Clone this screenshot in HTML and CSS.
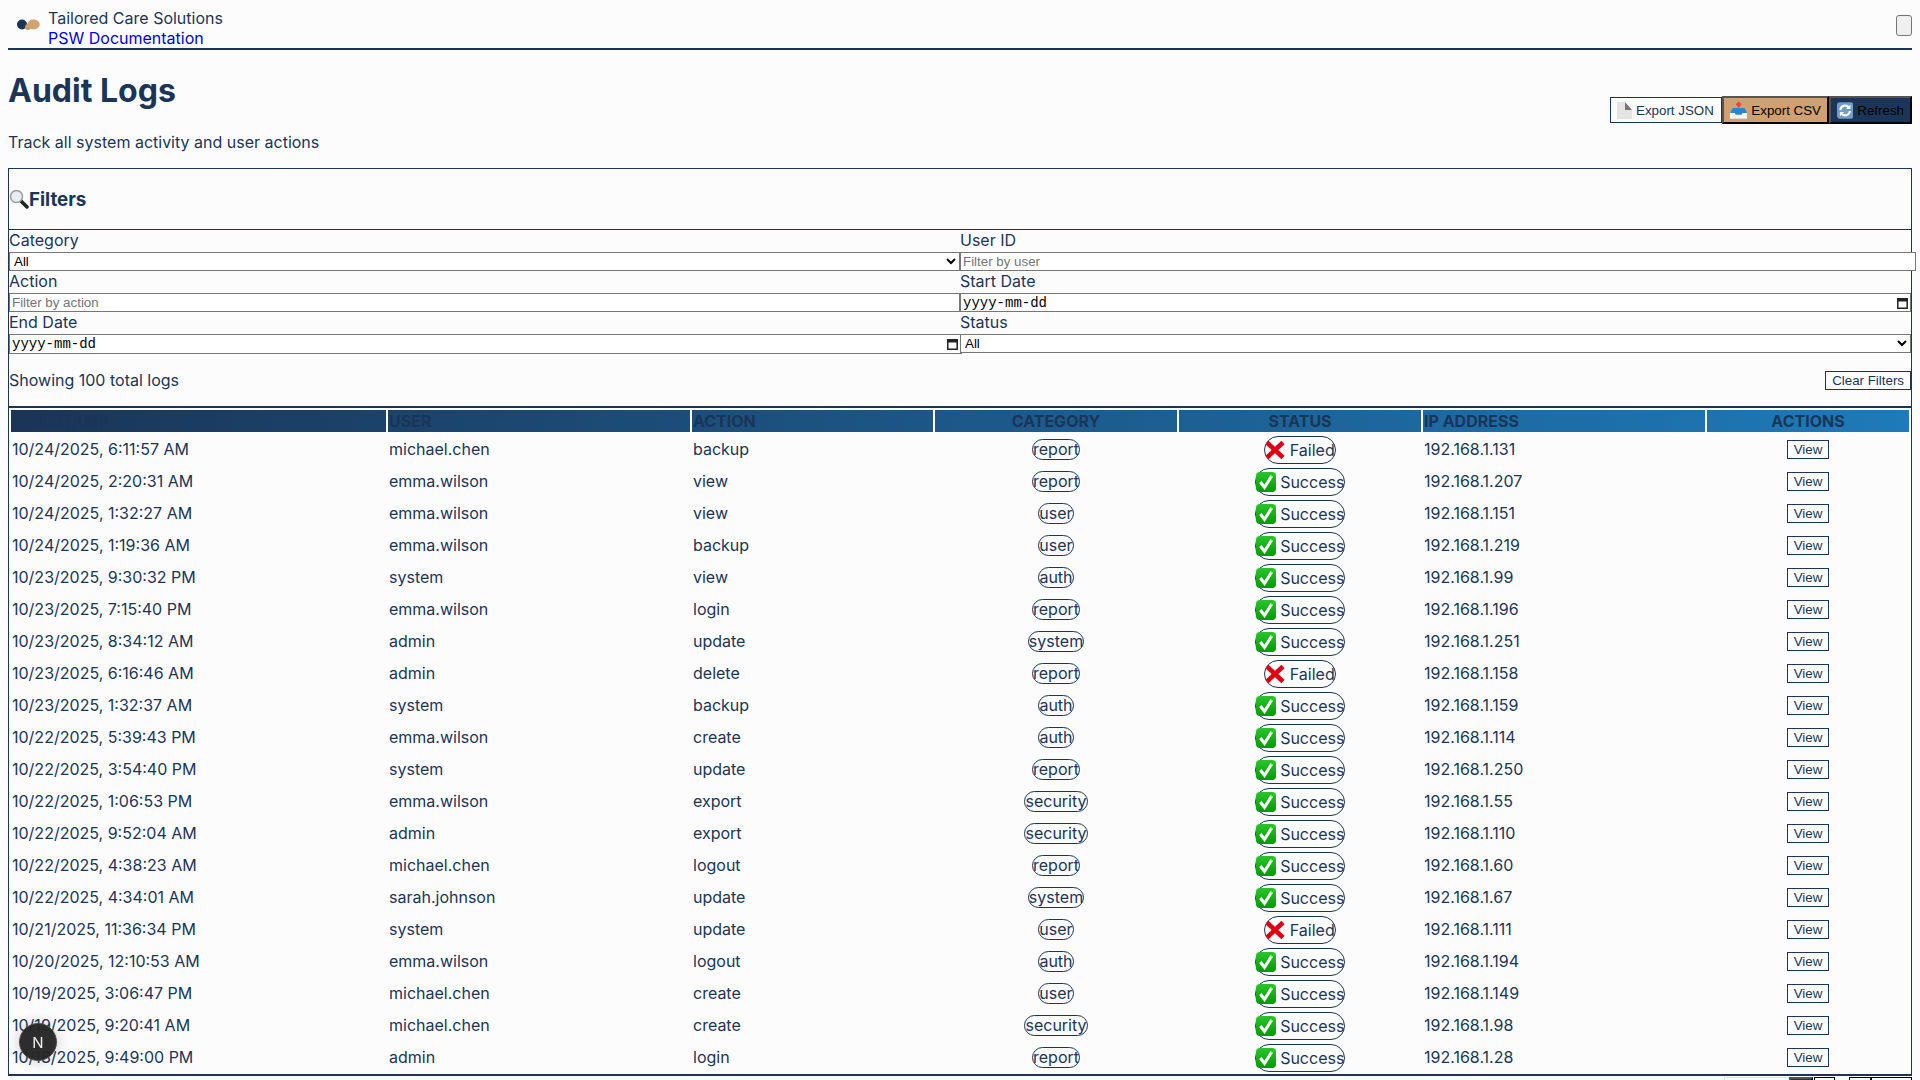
FILE: index.html
```html
<!DOCTYPE html>
<html lang="en">
<head>
    <meta charset="UTF-8">
    <meta name="viewport" content="width=device-width, initial-scale=1.0">
    <title>Audit Logs</title>
    <link rel="stylesheet" href="styles.css">
</head>
<body>
    <svg class="defs" width="0" height="0" aria-hidden="true">
        <defs>
            <linearGradient id="okfill" x1="0" y1="0" x2="0" y2="1">
                <stop offset="0" stop-color="#2cc52c"/>
                <stop offset="1" stop-color="#049a04"/>
            </linearGradient>
        </defs>
        <symbol id="ok" viewBox="0 0 20 20">
            <rect x="0" y="0" width="20" height="20" rx="4" fill="url(#okfill)"/>
            <path d="M4.300 10l4.200 5.300 7.200-11.300" fill="none" stroke="#fff" stroke-width="3"/>
        </symbol>
        <symbol id="bad" viewBox="0 0 20 20">
            <path d="M2 2.500l16 15M18 2.500l-16 15" fill="none" stroke="#e2000f" stroke-width="4.600"/>
        </symbol>
        <symbol id="cal" viewBox="0 0 11 12">
            <path d="M.8 2.500h9.400v8.700H.8z" fill="none" stroke="#222" stroke-width="1.500"/>
            <path d="M0 1h11v3.500H0z" fill="#222"/>
        </symbol>
    </svg>

    <header class="topbar">
        <svg class="logo" width="23" height="12" viewBox="0 0 23 12">
            <circle cx="5" cy="5.500" r="5" fill="#1a3558"/>
            <circle cx="11" cy="8" r="3" fill="#c99d68"/>
            <ellipse cx="16.500" cy="5.500" rx="6.200" ry="5" fill="#d2a272"/>
        </svg>
        <div class="brand">
            <div>Tailored Care Solutions</div>
            <a href="#">PSW Documentation</a>
        </div>
        <button class="menu-btn" type="button"></button>
    </header>

    <div class="page-head">
        <div>
            <h1>Audit Logs</h1>
            <p>Track all system activity and user actions</p>
        </div>
        <div class="head-actions">
            <button class="btn-json" type="button">
                <svg width="15" height="17" viewBox="0 0 15 17"><path d="M0 0h8v5l7 3v9H0z" fill="#e4e4e4"/><path d="M8 0l7 8H8z" fill="#777"/></svg>
                Export JSON
            </button>
            <button class="btn-csv" type="button">
                <svg width="18" height="18" viewBox="0 0 18 18"><path d="M9 0l3 3-3 4-3-4z" fill="#ee4444"/><path d="M0 11h18v7H0z" fill="#f4f4f4"/><path d="M3 7h12l3 5h-5l-1 2H6l-1-2H0z" fill="#2b86d0"/></svg>
                Export CSV
            </button>
            <button class="btn-refresh" type="button">
                <svg width="17" height="17" viewBox="0 0 17 17"><rect width="17" height="17" rx="3" fill="#6f9cc8"/><path d="M3.500 8a5 5 0 0 1 9-2.500M13.500 9a5 5 0 0 1-9 2.500" fill="none" stroke="#fff" stroke-width="2.200"/><path d="M14 2.500v4.500h-4.500zM3 14.500V10h4.500z" fill="#fff"/></svg>
                Refresh
            </button>
        </div>
    </div>

    <section class="filters">
        <h2>
            <svg width="20" height="20" viewBox="0 0 20 20"><path d="M11 11l7 7" stroke="#222" stroke-width="3.500" stroke-linecap="round"/><circle cx="7.500" cy="7.500" r="6" fill="#e6eef4" stroke="#9a9a9a" stroke-width="1.500"/></svg>Filters
        </h2>
        <div class="filter-grid">
            <div class="field">
                <label>Category</label>
                <select><option>All</option></select>
            </div>
            <div class="field">
                <label>User ID</label>
                <input class="over" type="text" placeholder="Filter by user">
            </div>
            <div class="field">
                <label>Action</label>
                <input type="text" placeholder="Filter by action">
            </div>
            <div class="field">
                <label>Start Date</label>
                <div class="date-box"><span>yyyy-mm-dd</span><svg width="11" height="12"><use href="#cal"/></svg></div>
            </div>
            <div class="field">
                <label>End Date</label>
                <div class="date-box wide"><span>yyyy-mm-dd</span><svg width="11" height="12"><use href="#cal"/></svg></div>
            </div>
            <div class="field">
                <label>Status</label>
                <select><option>All</option></select>
            </div>
        </div>
        <div class="filter-foot">
            <span>Showing 100 total logs</span>
            <button type="button">Clear Filters</button>
        </div>
    </section>

    <div class="table-box">
        <table>
            <colgroup>
                <col class="c-time"><col class="c-user"><col class="c-action"><col class="c-cat"><col class="c-status"><col class="c-ip"><col class="c-view">
            </colgroup>
            <thead>
                <tr>
                    <th>TIMESTAMP</th>
                    <th>USER</th>
                    <th>ACTION</th>
                    <th class="mid">CATEGORY</th>
                    <th class="mid">STATUS</th>
                    <th>IP ADDRESS</th>
                    <th class="mid">ACTIONS</th>
                </tr>
            </thead>
            <tbody id="rows"></tbody>
        </table>
    </div>

    <footer class="pager">
        <span>Showing 1 to 20 of 100 logs</span>
        <div class="pager-controls">
            <div class="page-box"></div>
            <button class="page-on" type="button"></button>
            <button type="button"></button>
            <button class="page-next" type="button"></button>
            <button class="page-last" type="button"></button>
        </div>
    </footer>

    <div class="dev-badge">N</div>

    <script>
        const logs = [
            ['10/24/2025, 6:11:57 AM', 'michael.chen', 'backup', 'report', 0, '192.168.1.131'],
            ['10/24/2025, 2:20:31 AM', 'emma.wilson', 'view', 'report', 1, '192.168.1.207'],
            ['10/24/2025, 1:32:27 AM', 'emma.wilson', 'view', 'user', 1, '192.168.1.151'],
            ['10/24/2025, 1:19:36 AM', 'emma.wilson', 'backup', 'user', 1, '192.168.1.219'],
            ['10/23/2025, 9:30:32 PM', 'system', 'view', 'auth', 1, '192.168.1.99'],
            ['10/23/2025, 7:15:40 PM', 'emma.wilson', 'login', 'report', 1, '192.168.1.196'],
            ['10/23/2025, 8:34:12 AM', 'admin', 'update', 'system', 1, '192.168.1.251'],
            ['10/23/2025, 6:16:46 AM', 'admin', 'delete', 'report', 0, '192.168.1.158'],
            ['10/23/2025, 1:32:37 AM', 'system', 'backup', 'auth', 1, '192.168.1.159'],
            ['10/22/2025, 5:39:43 PM', 'emma.wilson', 'create', 'auth', 1, '192.168.1.114'],
            ['10/22/2025, 3:54:40 PM', 'system', 'update', 'report', 1, '192.168.1.250'],
            ['10/22/2025, 1:06:53 PM', 'emma.wilson', 'export', 'security', 1, '192.168.1.55'],
            ['10/22/2025, 9:52:04 AM', 'admin', 'export', 'security', 1, '192.168.1.110'],
            ['10/22/2025, 4:38:23 AM', 'michael.chen', 'logout', 'report', 1, '192.168.1.60'],
            ['10/22/2025, 4:34:01 AM', 'sarah.johnson', 'update', 'system', 1, '192.168.1.67'],
            ['10/21/2025, 11:36:34 PM', 'system', 'update', 'user', 0, '192.168.1.111'],
            ['10/20/2025, 12:10:53 AM', 'emma.wilson', 'logout', 'auth', 1, '192.168.1.194'],
            ['10/19/2025, 3:06:47 PM', 'michael.chen', 'create', 'user', 1, '192.168.1.149'],
            ['10/19/2025, 9:20:41 AM', 'michael.chen', 'create', 'security', 1, '192.168.1.98'],
            ['10/18/2025, 9:49:00 PM', 'admin', 'login', 'report', 1, '192.168.1.28']
        ];

        document.getElementById('rows').innerHTML = logs.map(function (l) {
            const status = l[4]
                ? '<span class="pill-status"><svg width="20" height="20"><use href="#ok"/></svg> Success</span>'
                : '<span class="pill-status"><svg width="20" height="20"><use href="#bad"/></svg> Failed</span>';
            return `<tr>
                <td>${l[0]}</td>
                <td>${l[1]}</td>
                <td>${l[2]}</td>
                <td class="mid"><span class="pill-cat">${l[3]}</span></td>
                <td class="mid">${status}</td>
                <td>${l[5]}</td>
                <td class="mid"><button class="btn-view" type="button">View</button></td>
            </tr>`;
        }).join('');
    </script>
</body>
</html>
```

FILE: styles.css
```css
html, body {
    height: 100%;
    overflow: hidden;
}

body {
    margin: 0;
    padding: 0 8px;
    background-color: #fcfcfd;
    color: #1a3558;
    font-family: Inter, "Liberation Sans", sans-serif;
    font-size: 16px;
}

.defs {
    position: absolute;
}

.topbar {
    display: flex;
    align-items: center;
    height: 46px;
    padding: 2px 0 0 9px;
    border-bottom: 2px solid #1a3558;
}

.logo {
    flex: none;
    margin-right: 8px;
}

.brand {
    flex: 1;
    padding-top: 5px;
    line-height: 20px;
}

.brand a {
    color: #0000ee;
    text-decoration: none;
}

.menu-btn {
    width: 16px;
    height: 21px;
    padding: 0;
    background: #efefef;
    border: 1px solid #767676;
    border-radius: 3px;
}

.page-head {
    display: flex;
    justify-content: space-between;
    align-items: flex-end;
    height: 118px;
}

h1 {
    margin: 22px 0 0;
    font-size: 32px;
    font-weight: 700;
    line-height: 39px;
}

.page-head p {
    margin: 23px 0 16px;
    line-height: 19px;
}

.head-actions {
    display: flex;
    align-items: center;
    margin-bottom: 44px;
}

.head-actions button {
    display: flex;
    align-items: center;
    gap: 4px;
    padding: 0 6px;
    font-family: "Liberation Sans", sans-serif;
    font-size: 13.333px;
    white-space: nowrap;
}

.btn-json {
    width: 112px;
    height: 26px;
    background: #fcfcfd;
    border: 1px solid #1a3558;
    color: #1a3558;
}

.btn-csv {
    width: 107px;
    height: 28px;
    background: #d0a070;
    border: 2px outset #000;
    color: #000;
}

.btn-refresh {
    width: 83px;
    height: 28px;
    background: #1a3558;
    border: 2px outset #000;
    color: #000;
}

.filters {
    border: 1px solid #1a3558;
    border-bottom: 0;
}

h2 {
    display: flex;
    align-items: center;
    height: 60px;
    margin: 0;
    border-bottom: 1px solid #1a3558;
    font-size: 18.72px;
    font-weight: 700;
}

.filter-grid {
    display: grid;
    grid-template-columns: 951px 1fr;
}

.field {
    display: flex;
    flex-direction: column;
    min-width: 0;
}

.field label {
    height: 21px;
    padding-top: 1px;
    line-height: 19px;
}

.field input,
.field select,
.date-box {
    box-sizing: border-box;
    width: 100%;
    height: 19px;
    margin: 0;
    background: #fff;
    border: 1px solid #767676;
    border-radius: 0;
    color: #000;
    font-family: "Liberation Sans", sans-serif;
    font-size: 13.333px;
}

.field input {
    padding: 1px 2px;
}

.field select {
    padding: 0;
}

.field input.over {
    width: calc(100% + 5px);
}

.date-box {
    display: flex;
    justify-content: space-between;
    align-items: center;
    padding: 0 2px;
    font-family: "Liberation Mono", monospace;
    font-size: 14px;
}

.date-box.wide {
    width: calc(100% + 2px);
    height: 20px;
    padding-right: 3px;
}

.filter-foot {
    display: flex;
    justify-content: space-between;
    align-items: center;
    height: 52px;
    line-height: 19px;
}

.filter-foot button {
    height: 19px;
    padding: 0 6px;
    background: #fcfcfd;
    border: 1px solid #1a3558;
    color: #1a3558;
    font-family: "Liberation Sans", sans-serif;
    font-size: 13.333px;
}

.table-box {
    border: 1px solid #1a3558;
    border-width: 2px 1px;
}

table {
    width: 100%;
    table-layout: fixed;
    border-collapse: separate;
    border-spacing: 2px;
}

.c-time { width: 375px; }
.c-user { width: 302px; }
.c-action { width: 241px; }
.c-cat { width: 242px; }
.c-status { width: 242px; }
.c-ip { width: 282px; }
.c-view { width: 202px; }

thead tr {
    background: linear-gradient(90deg, #1a3558, #1e7ab8);
}

th {
    height: 22px;
    padding: 0 1px;
    color: #1a3558;
    font-weight: 700;
    text-align: left;
}

td {
    height: 30px;
    padding: 0 1px;
    text-align: left;
}

th.mid,
td.mid {
    text-align: center;
}

.pill-cat,
.pill-status {
    display: inline-block;
    border: 1px solid #1a3558;
    border-radius: 16px;
    vertical-align: middle;
}

.pill-cat {
    line-height: 19px;
}

.pill-status {
    margin-top: 1px;
    line-height: 26px;
}

.pill-status svg {
    vertical-align: -4px;
}

.btn-view {
    display: block;
    width: 42px;
    height: 19px;
    margin: 0 auto;
    padding: 0;
    background: #fcfcfd;
    border: 1px solid #1a3558;
    color: #1a3558;
    font-family: "Liberation Sans", sans-serif;
    font-size: 13.333px;
}

.pager {
    display: flex;
    justify-content: space-between;
    align-items: flex-start;
    line-height: 19px;
}

.pager span {
    padding-top: 1px;
    color: #8a94a6;
    font-size: 14px;
}

.pager-controls {
    display: flex;
    margin-top: 1px;
}

.pager-controls button,
.page-box {
    box-sizing: border-box;
    width: 21px;
    height: 24px;
    margin: 0 0 0 1px;
    padding: 0;
    background: #fcfcfd;
    border: 1px solid #000;
}

.page-box {
    width: 65px;
    margin: 0;
    border-color: #e4e4e4;
}

.pager-controls .page-on {
    width: 24px;
    margin: 0;
    background: #1a3558;
    border: 2px outset #000;
}

.pager-controls .page-next {
    width: 22px;
    margin-left: 14px;
}

.pager-controls .page-last {
    width: 41px;
    margin: 0;
}

.dev-badge {
    position: fixed;
    left: 19px;
    top: 1023px;
    display: flex;
    align-items: center;
    justify-content: center;
    box-sizing: border-box;
    width: 38px;
    height: 38px;
    border: 1px solid #4a4a4a;
    border-radius: 50%;
    background: rgba(36, 36, 36, 0.96);
    color: #eee;
    font-size: 15px;
    box-shadow: 0 0 14px rgba(0, 0, 0, 0.2);
}
```
